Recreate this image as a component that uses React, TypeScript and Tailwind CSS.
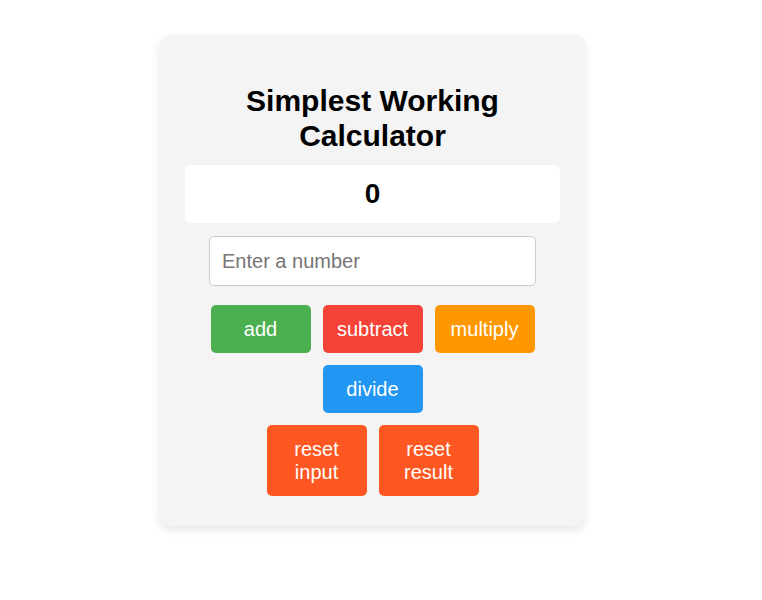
import * as React from "react";

type Op = "add" | "subtract" | "multiply" | "divide";

const opButtons: Array<{ op: Op; label: string; className: string }> = [
  { op: "add", label: "add", className: "bg-[#4caf50]" },
  { op: "subtract", label: "subtract", className: "bg-[#f44336]" },
  { op: "multiply", label: "multiply", className: "bg-[#ff9800]" },
  { op: "divide", label: "divide", className: "bg-[#2196f3]" }
];

const btnBase =
  "m-[6px] w-[100px] rounded-[5px] py-[12.5px] text-[20px] leading-[23px] text-white cursor-pointer";

export default function App() {
  const [result, setResult] = React.useState(0);
  const [value, setValue] = React.useState("");

  const run = (op: Op) => {
    const n = Number.parseFloat(value);
    if (Number.isNaN(n)) return;
    setResult((r) => {
      if (op === "add") return r + n;
      if (op === "subtract") return r - n;
      if (op === "multiply") return r * n;
      return n === 0 ? r : r / n;
    });
  };

  return (
    <div className="flex min-h-[600px] justify-center bg-white pr-[17px] pt-[35px] font-['Liberation_Sans',Arial,sans-serif]">
      <div className="h-fit w-[425px] rounded-[10px] bg-[#f4f4f4] px-[25px] pb-[24px] pt-[49px] shadow-[0_4px_8px_rgba(0,0,0,0.1)]">
        <h1 className="text-center text-[30px] font-bold leading-[34.5px] text-black">
          Simplest Working
          <br />
          Calculator
        </h1>

        <div className="mt-[12px] flex h-[58px] items-center justify-center rounded-[6px] bg-white text-[28px] font-bold text-black">
          {result}
        </div>

        <div className="mt-[13px] flex justify-center">
          <input
            type="number"
            value={value}
            onChange={(e) => setValue(e.target.value)}
            placeholder="Enter a number"
            className="h-[50px] w-[327px] rounded-[5px] border border-[#cccccc] bg-white px-[12px] text-[20px] text-black outline-none placeholder:text-[#757575]"
          />
        </div>

        <div className="mt-[13px] flex flex-wrap justify-center">
          {opButtons.map((b) => (
            <button key={b.op} className={`${btnBase} ${b.className}`} onClick={() => run(b.op)}>
              {b.label}
            </button>
          ))}
        </div>

        <div className="flex flex-wrap justify-center">
          <button className={`${btnBase} bg-[#ff5722]`} onClick={() => setValue("")}>
            reset
            <br />
            input
          </button>
          <button className={`${btnBase} bg-[#ff5722]`} onClick={() => setResult(0)}>
            reset
            <br />
            result
          </button>
        </div>
      </div>
    </div>
  );
}
